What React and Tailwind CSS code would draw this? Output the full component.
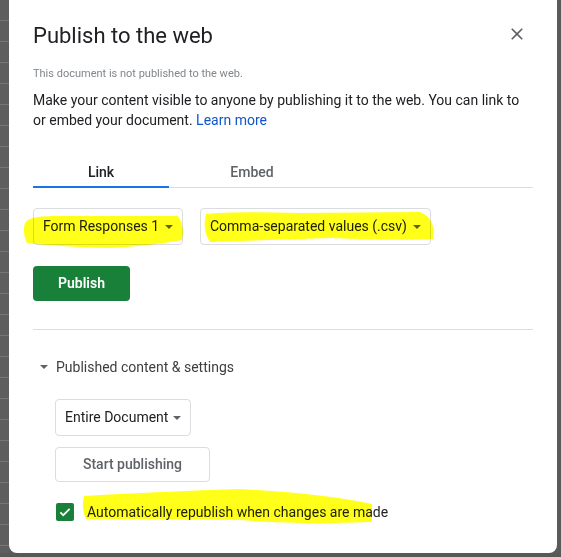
import React from 'react';

const FONT = { fontFamily: 'Roboto, "Liberation Sans", Arial, sans-serif' };

function Caret() {
    return <span className="inline-block shrink-0 w-0 h-0 border-l-[4px] border-r-[4px] border-t-[4px] border-l-transparent border-r-transparent border-t-[#5f6368]" />;
}

function Select({ label, className }) {
    return (
        <div className={`h-[37px] shrink-0 flex items-center justify-between whitespace-nowrap border border-[#dadce0] rounded-[4px] bg-white pl-[9px] pr-[9px] text-[14px] text-[#202124] ${className}`}>
            <span>{label}</span>
            <Caret />
        </div>
    );
}

export default function App() {
    return (
        <div className="relative w-[561px] h-[557px] overflow-hidden flex bg-[#5b5b5b]" style={FONT}>
            {/* spreadsheet rows behind the overlay */}
            <div className="w-[9px] h-full bg-[#5e5e5e] bg-[repeating-linear-gradient(to_bottom,transparent_0px,transparent_20px,#767676_20px,#767676_21px)]" />

            {/* dialog */}
            <div className="w-[548px] h-[553px] bg-white rounded-b-[8px] px-6 pt-[22px] flex flex-col relative">
                <div className="flex items-start justify-between">
                    <h1 className="text-[22px] leading-7 text-[#202124] font-normal">Publish to the web</h1>
                    <svg width="20" height="20" viewBox="0 0 24 24" className="mt-[2px] mr-[6px]" fill="#5f6368">
                        <path d="M19 6.41L17.59 5 12 10.59 6.41 5 5 6.41 10.59 12 5 17.59 6.41 19 12 13.41 17.59 19 19 17.59 13.41 12z" />
                    </svg>
                </div>

                <p className="mt-[16px] text-[11px] leading-4 text-[#80868b] whitespace-nowrap">This document is not published to the web.</p>
                <p className="mt-2 text-[14px] leading-5 text-[#202124]">
                    Make your content visible to anyone by publishing it to the web. You can link to or embed your document. <span className="text-[#1155cc]">Learn more</span>
                </p>

                {/* tabs */}
                <div className="mt-5 flex border-b border-[#dadce0]">
                    <div className="w-[136px] -mb-px pt-3 pb-1 border-b-2 border-[#1a73e8] text-center text-[14px] leading-5 font-medium text-[#202124]">Link</div>
                    <div className="w-[166px] pt-3 pb-1 text-center text-[14px] leading-5 font-medium text-[#5f6368]">Embed</div>
                </div>

                <div className="mt-5 flex gap-[17px]">
                    <Select label="Form Responses 1" className="w-[150px]" />
                    <Select label="Comma-separated values (.csv)" className="w-[231px]" />
                </div>

                <div className="mt-[21px]">
                    <button className="w-[97px] h-[35px] rounded-[4px] bg-[#188038] text-white text-[14px] font-semibold">Publish</button>
                </div>

                <div className="mt-[28px] h-px bg-[#dadce0]" />

                <div className="mt-[27px] flex items-center text-[14px] leading-5 text-[#3c4043]">
                    <span className="ml-[7px] mr-[8px] flex"><Caret /></span>
                    <span>Published content &amp; settings</span>
                </div>

                <div className="pl-[22px] flex flex-col items-start">
                    <Select label="Entire Document" className="mt-[22px] w-[136px]" />
                    <button className="mt-[11px] w-[155px] h-[35px] rounded-[4px] border border-[#dadce0] bg-white text-[14px] font-medium text-[#5f6368]">Start publishing</button>
                    <label className="mt-5 flex items-center text-[14px] leading-5 text-[#202124]">
                        <span className="ml-px w-[18px] h-[18px] rounded-[2px] bg-[#188038] flex items-center justify-center">
                            <svg width="14" height="14" viewBox="0 0 24 24" fill="none" stroke="white" strokeWidth="3">
                                <path d="M4 12.5l5 5L20 6.5" />
                            </svg>
                        </span>
                        <span className="ml-[13px]">Automatically republish when changes are made</span>
                    </label>
                </div>
            </div>

            <div className="w-[4px] h-full bg-[#5a5a5a]" />
            <div className="absolute left-0 bottom-0 w-full h-[4px] bg-[#585858]" />

            {/* highlighter marks */}
            <svg className="absolute inset-0 pointer-events-none mix-blend-multiply" width="561" height="557">
                <g fill="#ffff1a">
                    <path d="M25,223 Q29,215 60,216 L178,216 Q185,226 182,240 Q150,246 110,248 Q60,247 27,243 Q22,233 25,223 Z" />
                    <path d="M206,214 Q230,211 300,213 L420,212 Q436,218 433,239 Q400,241 330,238 L210,242 Q202,230 206,214 Z" />
                    <path d="M84,496 Q150,492 240,489 Q320,493 372,504 L372,522 Q300,525 240,520 Q150,519 86,519 Q81,508 84,496 Z" />
                </g>
            </svg>
        </div>
    );
}
